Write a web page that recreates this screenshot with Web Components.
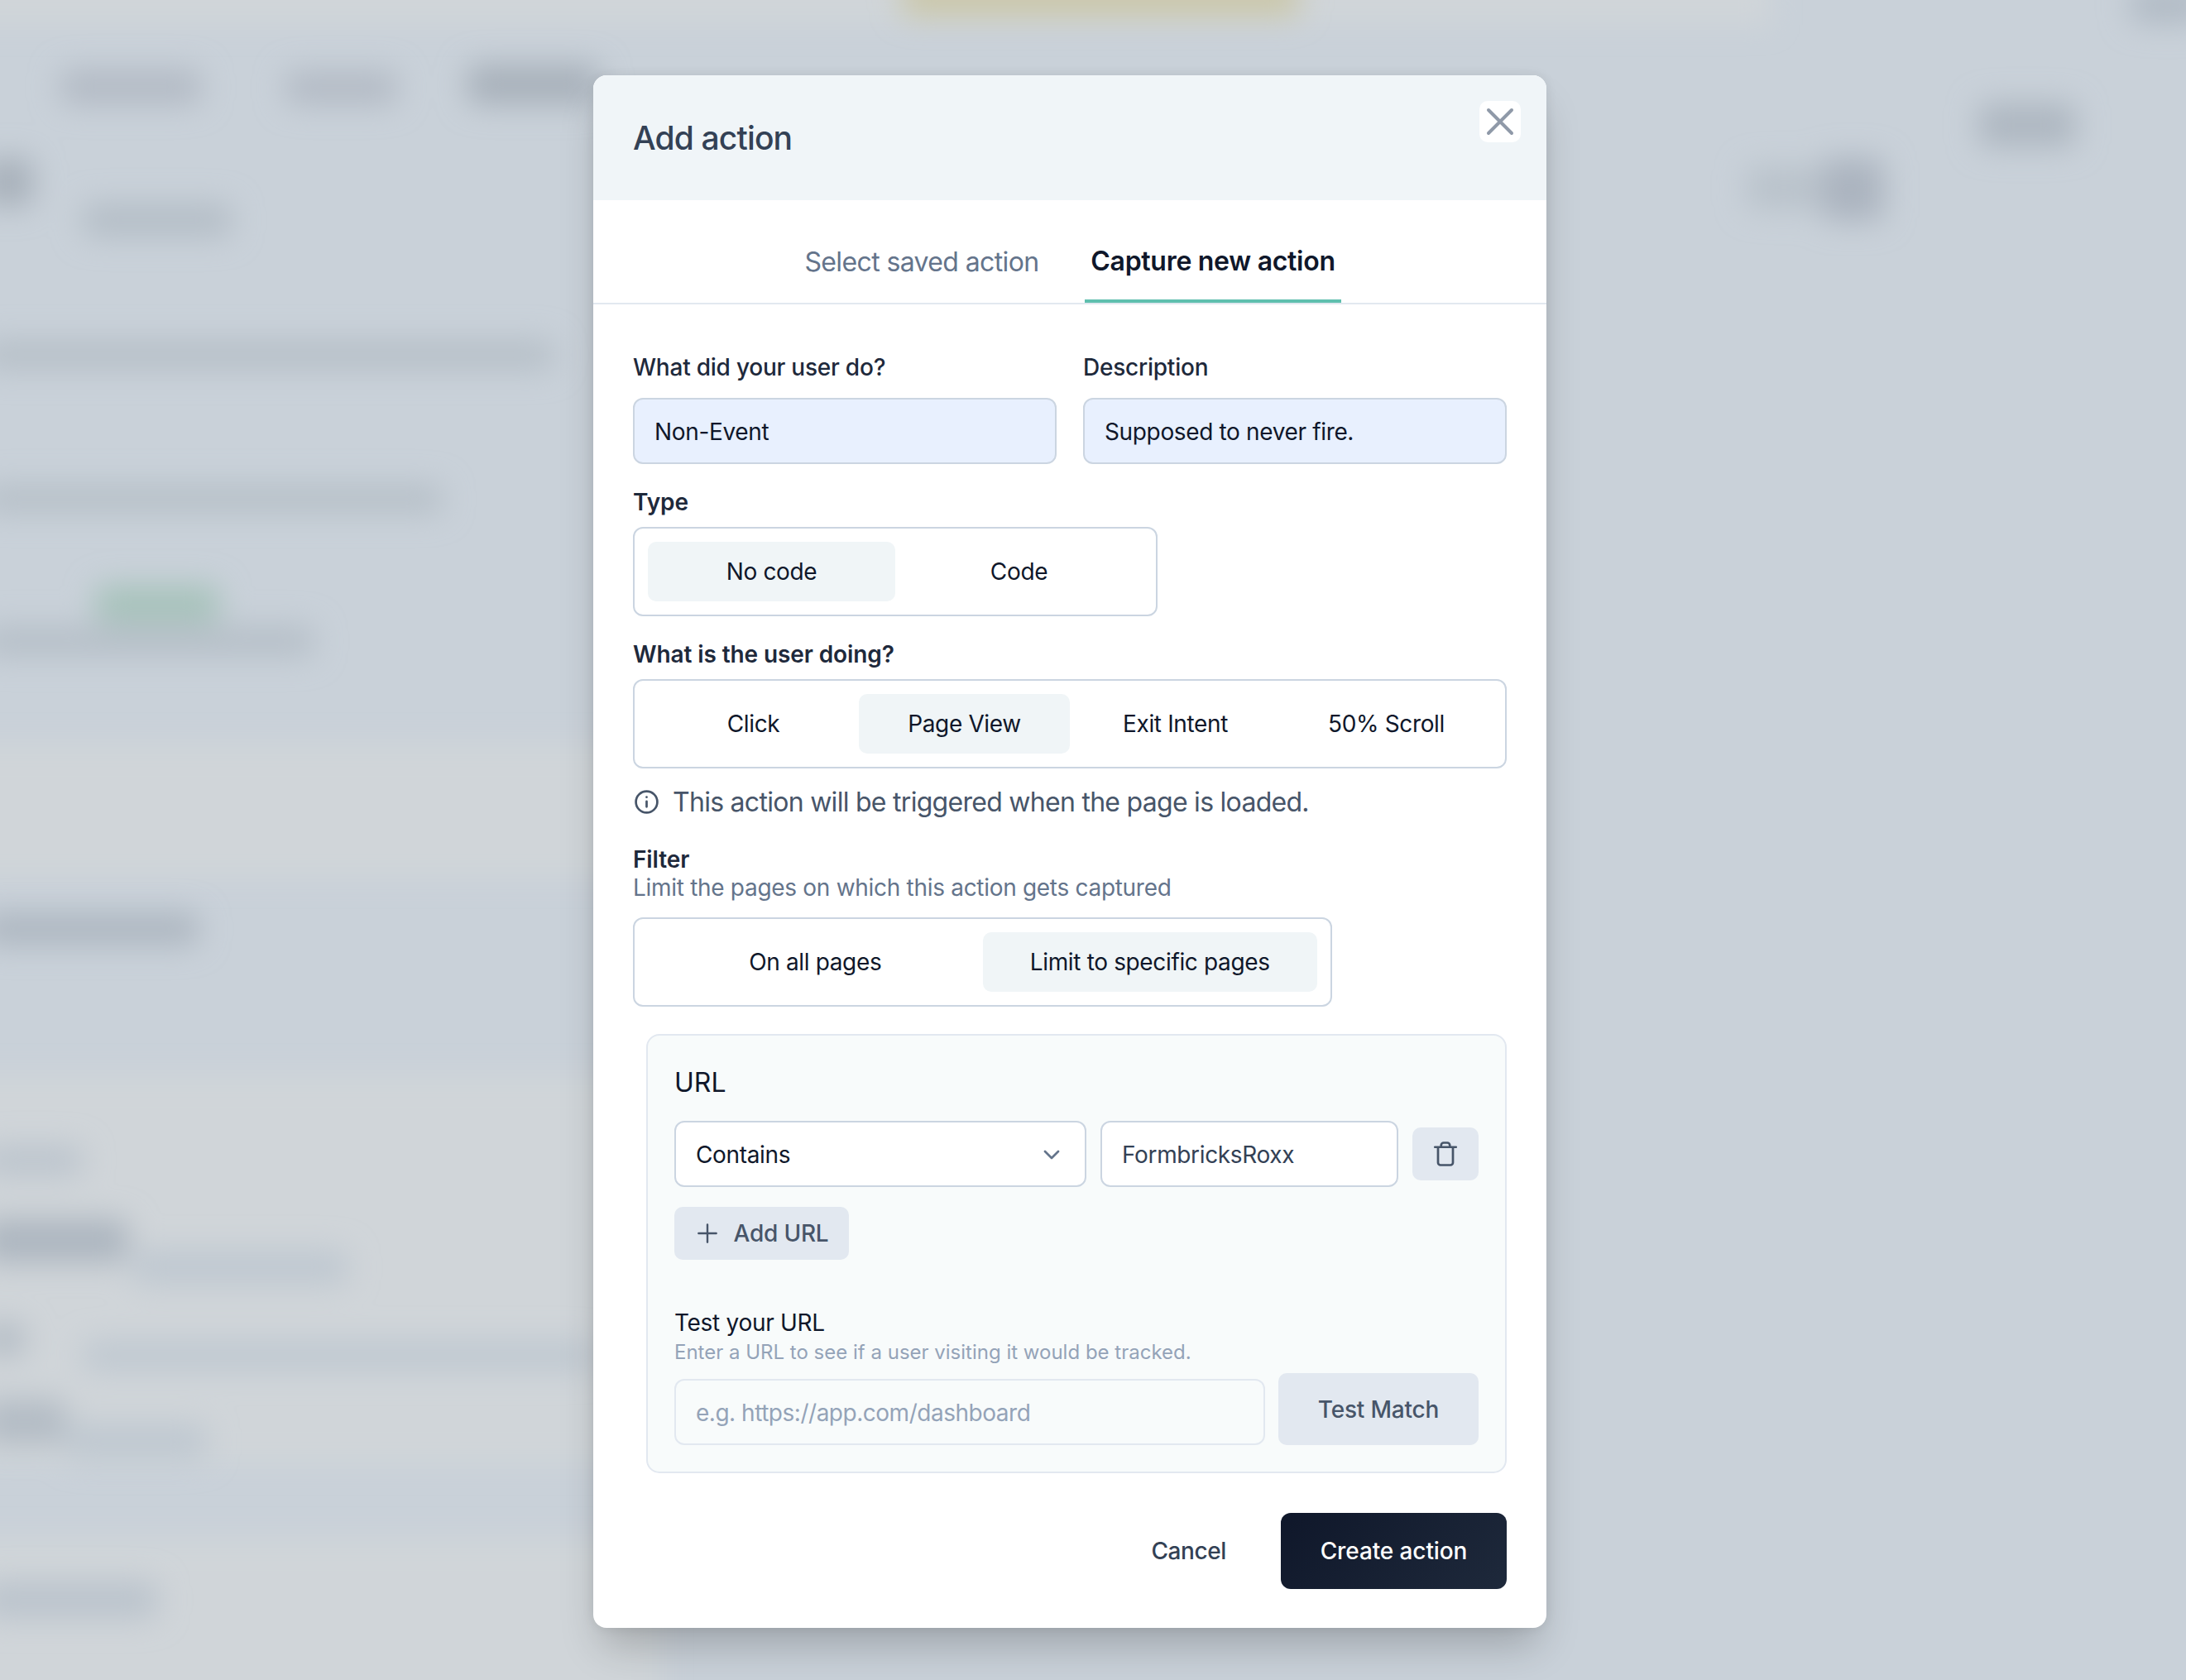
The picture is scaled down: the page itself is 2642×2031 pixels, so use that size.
<!DOCTYPE html>
<html lang="en">
<head>
<meta charset="utf-8">
<title>Add action</title>
<style>
  html, body { margin: 0; height: 100%; }
  body {
    position: relative;
    width: 2642px;
    height: 2031px;
    overflow: hidden;
    font-family: Inter, "Liberation Sans", sans-serif;
    background: #c9d1d9;
  }
  action-modal {
    position: absolute;
    top: 91px;
    left: 717px;
  }
</style>
</head>
<body>
  <blurred-page></blurred-page>
  <action-modal></action-modal>

<script>
// what shows through behind the dialog, all of it blurred
class BlurredPage extends HTMLElement {
  constructor() {
    super();
    this.attachShadow({ mode: 'open' });
  }

  connectedCallback() {
    const bands = [
      [-40, -40, 2180, 70], [-40, 900, 840, 160], [-40, 1300, 840, 470], [-40, 1860, 840, 211]
    ];
    const blobs = [
      [73, 84, 170, 42, '#b2bac4'], [345, 86, 135, 40, '#b2bac4'], [565, 78, 160, 48, '#a7b0ba'],
      [-20, 191, 60, 58, '#a7b0ba'], [100, 246, 180, 40, '#b4bdc6'],
      [-20, 411, 690, 36, '#b6bfc7'], [-20, 586, 555, 34, '#b6bfc7'],
      [115, 708, 150, 44, '#a6c2ba'], [-20, 756, 400, 38, '#b6bfc8'],
      [-20, 1104, 260, 38, '#acb5bf'],
      [-20, 1386, 120, 34, '#bac3cc'], [-20, 1474, 175, 52, '#acb5bf'], [160, 1512, 260, 40, '#bec7d0'],
      [-20, 1600, 50, 38, '#b2bbc4'], [100, 1622, 620, 34, '#bec7d0'],
      [-20, 1692, 100, 54, '#b2bbc4'], [80, 1722, 170, 42, '#bec7d0'], [-20, 1912, 210, 44, '#bac3cc'],
      [2391, 124, 118, 54, '#aeb7c1'], [2201, 191, 76, 76, '#abb4bf'], [2111, 201, 88, 52, '#b9c2cb'],
      [2575, -16, 90, 44, '#b0bac4'],
      [1090, -26, 480, 44, '#cac6a6']
    ];
    this.shadowRoot.innerHTML = `
      <style>
        :host { display: block; width: 2642px; height: 2031px; }
        svg { display: block; }
      </style>
      <svg width="2642" height="2031" viewBox="0 0 2642 2031">
        <defs>
          <filter id="soft" x="-50%" y="-200%" width="200%" height="500%"><feGaussianBlur stdDeviation="18"/></filter>
          <filter id="band" x="-5%" y="-50%" width="110%" height="200%"><feGaussianBlur stdDeviation="16"/></filter>
        </defs>
        <rect width="2642" height="2031" fill="#c9d1d9"/>
        <g filter="url(#band)" fill="#d0d5d9">
          ${bands.map(b => `<rect x="${b[0]}" y="${b[1]}" width="${b[2]}" height="${b[3]}"/>`).join('')}
        </g>
        <g filter="url(#soft)">
          ${blobs.map(b => `<rect x="${b[0]}" y="${b[1]}" width="${b[2]}" height="${b[3]}" rx="10" fill="${b[4]}"/>`).join('')}
        </g>
      </svg>
    `;
  }
}

// bordered box with the toggle options, attribute "active" is the selected label
class OptionSelect extends HTMLElement {
  constructor() {
    super();
    this.attachShadow({ mode: 'open' });
  }

  connectedCallback() {
    const active = this.getAttribute('active');
    const options = this.getAttribute('options').split('|');
    this.shadowRoot.innerHTML = `
      <style>
        :host {
          display: grid;
          grid-auto-flow: column;
          grid-auto-columns: 1fr;
          box-sizing: border-box;
          height: 108px;
          padding: 16px;
          border: 2px solid #cbd5e1;
          border-radius: 12px;
          background: #fff;
          font-size: 28px;
          letter-spacing: -.35px;
          color: #0f172a;
        }
        div {
          display: flex;
          align-items: center;
          justify-content: center;
          border-radius: 10px;
        }
        .on { background: #f0f5f7; }
      </style>
      ${options.map(o => `<div class="${o === active ? 'on' : ''}">${o}</div>`).join('')}
    `;
  }
}

class TextField extends HTMLElement {
  constructor() {
    super();
    this.attachShadow({ mode: 'open' });
  }

  connectedCallback() {
    this.shadowRoot.innerHTML = `
      <style>
        :host {
          display: flex;
          align-items: center;
          box-sizing: border-box;
          height: 80px;
          padding: 1px 24px 0;
          border: 2px solid #cbd5e1;
          border-radius: 12px;
          background: #fff;
          font-size: 28px;
          letter-spacing: -.35px;
          color: #0f172a;
        }
        :host([filled]) { background: #e8f0fe; }
        :host([muted]) {
          background: #f8fbfb;
          border-color: #e2e8f0;
          color: #94a3b8;
          letter-spacing: -.48px;
        }
        ::slotted(svg) { margin-left: auto; }
      </style>
      <slot></slot>
    `;
  }
}

class ActionModal extends HTMLElement {
  constructor() {
    super();
    this.attachShadow({ mode: 'open' });
  }

  connectedCallback() {
    this.shadowRoot.innerHTML = `
      <style>
        :host {
          display: block;
          box-sizing: border-box;
          width: 1152px;
          height: 1877px;
          overflow: hidden;
          border-radius: 16px;
          background: #fff;
          color: #0f172a;
          font-size: 28px;
          box-shadow: 0 30px 50px -10px rgba(0, 0, 0, .22), 0 0 14px rgba(0, 0, 0, .08);
        }
        header {
          display: flex;
          justify-content: space-between;
          align-items: flex-start;
          box-sizing: border-box;
          height: 151px;
          padding: 31px 31px 0 48px;
          background: #f0f5f8;
        }
        h2 {
          margin: 21px 0 0;
          font-size: 39px;
          line-height: 48px;
          letter-spacing: -.85px;
          font-weight: 500;
          color: #334155;
        }
        .close {
          display: flex;
          align-items: center;
          justify-content: center;
          width: 50px;
          height: 50px;
          border-radius: 10px;
          background: #fff;
        }
        nav {
          display: flex;
          justify-content: center;
          box-sizing: border-box;
          height: 126px;
          padding-right: 6px;
          border-bottom: 2px solid #e2e8f0;
          font-size: 32px;
          color: #64748b;
        }
        nav span {
          display: flex;
          align-items: center;
          justify-content: center;
          box-sizing: border-box;
          height: 124px;
          padding-top: 24px;
        }
        nav .saved { width: 310px; margin-right: 42px; letter-spacing: -.62px; }
        nav .capture {
          width: 310px;
          border-bottom: 4px solid #5fbfae;
          color: #0f172a;
          font-weight: 600;
          letter-spacing: -.28px;
          padding-top: 26px;
        }
        form {
          display: flex;
          flex-direction: column;
          padding: 0 48px;
        }
        .pair {
          display: grid;
          grid-template-columns: 1fr 1fr;
          gap: 32px;
          margin-top: 59px;
        }
        label { display: block; line-height: 34px; }
        .m { font-weight: 500; letter-spacing: -.23px; color: #1e293b; }
        .s { font-weight: 600; letter-spacing: -.1px; color: #1e293b; }
        .pair label { margin-bottom: 20px; }
        .type { margin-top: 29px; }
        .type label, .doing label { margin-bottom: 13px; }
        .type option-select { width: 634px; }
        .doing { margin-top: 29px; }
        .info {
          display: flex;
          align-items: center;
          gap: 16px;
          height: 40px;
          margin-top: 20px;
          padding-left: 1px;
          font-size: 32px;
          letter-spacing: -.72px;
          color: #475569;
        }
        .filter { margin-top: 33px; }
        .filter p { margin: 0; line-height: 34px; letter-spacing: -.3px; color: #64748b; }
        .filter option-select { width: 845px; margin-top: 19px; }
        .urls {
          display: flex;
          flex-direction: column;
          box-sizing: border-box;
          height: 531px;
          margin: 33px 0 0 16px;
          padding: 37px 32px 0;
          border: 2px solid #e2e8f0;
          border-radius: 16px;
          background: #f8fbfb;
        }
        .urls h3 { margin: 0; font-size: 32px; line-height: 40px; font-weight: 400; }
        .row {
          display: grid;
          grid-template-columns: 498px 360px 80px;
          gap: 17px;
          align-items: center;
          margin-top: 26px;
        }
        .row text-field:nth-child(2) { color: #334155; }
        .soft {
          display: flex;
          align-items: center;
          justify-content: center;
          height: 64px;
          border-radius: 10px;
          background: #e2e8f0;
          color: #475569;
          font-weight: 500;
          letter-spacing: -.2px;
        }
        .add {
          align-self: flex-start;
          gap: 15px;
          box-sizing: border-box;
          width: 211px;
          margin-top: 24px;
        }
        .test { margin-top: 59px; line-height: 34px; font-weight: 400; letter-spacing: -.3px; }
        .hint { font-size: 24px; line-height: 30px; color: #94a3b8; margin-top: 4px; }
        .try {
          display: grid;
          grid-template-columns: 714px 242px;
          gap: 16px;
          align-items: end;
          margin-top: 10px;
        }
        .try .soft { height: 87px; box-sizing: border-box; }
        footer {
          display: flex;
          justify-content: flex-end;
          align-items: center;
          gap: 66px;
          margin-top: 48px;
          font-weight: 500;
          color: #334155;
        }
        footer span { letter-spacing: -.4px; }
        .create {
          display: flex;
          align-items: center;
          justify-content: center;
          width: 273px;
          height: 92px;
          border-radius: 12px;
          background: linear-gradient(135deg, #0f172a, #1e293b);
          color: #fff;
          letter-spacing: -.1px;
        }
      </style>
      <header>
        <h2>Add action</h2>
        <div class="close">
          <svg width="48" height="48" viewBox="0 0 24 24" fill="none" stroke="#8f99a8" stroke-width="2" stroke-linecap="round"><path d="M5 5l14 14M19 5L5 19"/></svg>
        </div>
      </header>
      <nav>
        <span class="saved">Select saved action</span>
        <span class="capture">Capture new action</span>
      </nav>
      <form>
        <div class="pair">
          <div>
            <label class="m">What did your user do?</label>
            <text-field filled>Non-Event</text-field>
          </div>
          <div>
            <label class="m">Description</label>
            <text-field filled>Supposed to never fire.</text-field>
          </div>
        </div>
        <div class="type">
          <label class="s">Type</label>
          <option-select options="No code|Code" active="No code"></option-select>
        </div>
        <div class="doing">
          <label class="s">What is the user doing?</label>
          <option-select options="Click|Page View|Exit Intent|50% Scroll" active="Page View"></option-select>
        </div>
        <div class="info">
          <svg width="31" height="31" viewBox="0 0 24 24" fill="none" stroke="#475569" stroke-width="2.1" stroke-linecap="round"><circle cx="12" cy="12" r="10"/><path d="M12 11.5v5M12 7.5v.01"/></svg>
          <span>This action will be triggered when the page is loaded.</span>
        </div>
        <div class="filter">
          <label class="s">Filter</label>
          <p>Limit the pages on which this action gets captured</p>
          <option-select options="On all pages|Limit to specific pages" active="Limit to specific pages"></option-select>
        </div>
        <section class="urls">
          <h3>URL</h3>
          <div class="row">
            <text-field>Contains
              <svg width="32" height="32" viewBox="0 0 24 24" fill="none" stroke="#64748b" stroke-width="2" stroke-linecap="round" stroke-linejoin="round"><path d="M6 9l6 6 6-6"/></svg>
            </text-field>
            <text-field>FormbricksRoxx</text-field>
            <div class="soft">
              <svg width="36" height="36" viewBox="0 0 24 24" fill="none" stroke="#475569" stroke-width="1.8" stroke-linecap="round" stroke-linejoin="round"><path d="M3.5 6.5h17M6 6.5V19a2 2 0 0 0 2 2h8a2 2 0 0 0 2-2V6.5M8.5 6.5V5a2 2 0 0 1 2-2h3a2 2 0 0 1 2 2v1.5"/></svg>
            </div>
          </div>
          <div class="soft add">
            <svg width="32" height="32" viewBox="0 0 24 24" fill="none" stroke="#475569" stroke-width="1.8" stroke-linecap="round"><path d="M12 4v16M4 12h16"/></svg>
            <span>Add URL</span>
          </div>
          <div class="test">Test your URL</div>
          <div class="hint">Enter a URL to see if a user visiting it would be tracked.</div>
          <div class="try">
            <text-field muted>e.g. https://app.com/dashboard</text-field>
            <div class="soft">Test Match</div>
          </div>
        </section>
        <footer>
          <span>Cancel</span>
          <div class="create">Create action</div>
        </footer>
      </form>
    `;
  }
}

customElements.define('blurred-page', BlurredPage);
customElements.define('option-select', OptionSelect);
customElements.define('text-field', TextField);
customElements.define('action-modal', ActionModal);
</script>
</body>
</html>
